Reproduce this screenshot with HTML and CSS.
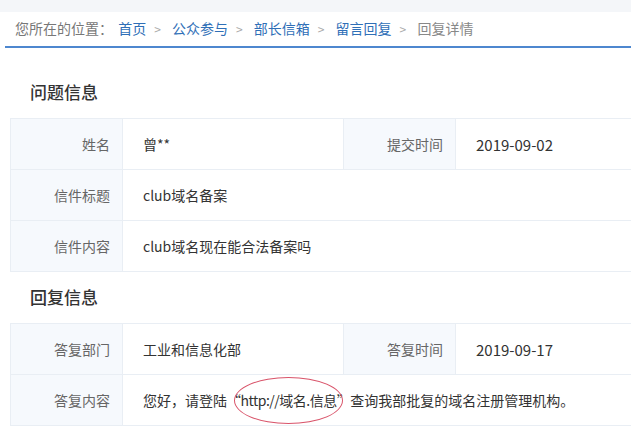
FILE: index.html
```html
<!DOCTYPE html>
<html lang="zh-CN">
<head>
    <meta charset="UTF-8">
    <title>回复详情</title>
    <link rel="stylesheet" href="styles.css">
</head>
<body>
    <div class="topbar"></div>
    <div class="crumbs">
        <span class="here">您所在的位置：</span>
        <a href="#">首页</a><span class="sep">&gt;</span>
        <a href="#">公众参与</a><span class="sep">&gt;</span>
        <a href="#">部长信箱</a><span class="sep">&gt;</span>
        <a href="#">留言回复</a><span class="sep">&gt;</span>
        <span class="current">回复详情</span>
    </div>

    <div class="content">
        <h3 class="sec-title first">问题信息</h3>
        <table class="info">
            <tr>
                <th>姓名</th>
                <td>曾**</td>
                <th>提交时间</th>
                <td class="date">2019-09-02</td>
            </tr>
            <tr>
                <th>信件标题</th>
                <td colspan="3">club域名备案</td>
            </tr>
            <tr>
                <th>信件内容</th>
                <td colspan="3">club域名现在能合法备案吗</td>
            </tr>
        </table>

        <h3 class="sec-title">回复信息</h3>
        <table class="info">
            <tr>
                <th>答复部门</th>
                <td>工业和信息化部</td>
                <th>答复时间</th>
                <td class="date">2019-09-17</td>
            </tr>
            <tr>
                <th>答复内容</th>
                <td colspan="3">您好，请登陆<span class="mark">“http://域名.信息”</span>查询我部批复的域名注册管理机构。</td>
            </tr>
        </table>
    </div>
</body>
</html>
```

FILE: styles.css
```css
body {
    margin: 0;
    font-family: "Noto Sans CJK SC", "Liberation Sans", sans-serif;
    background-color: #fff;
    overflow: hidden;
}
.topbar {
    height: 12px;
    background-color: #f4f6f9;
}
.crumbs {
    height: 34px;
    line-height: 32px;
    margin-left: 5px;
    padding-left: 10px;
    border-bottom: 2px solid #4d87cf;
    font-size: 14px;
    color: #777;
    white-space: nowrap;
}
.crumbs a {
    color: #2f6fb7;
    text-decoration: none;
}
.crumbs .here {
    margin-right: 2px;
}
.crumbs .sep {
    margin: 0 8px;
    color: #aaa;
    font-size: 12px;
}
.crumbs .current {
    color: #888;
}
.content {
    margin-left: 10px;
    width: 700px;
}
.sec-title {
    margin: 0;
    padding: 15px 0 16px 20px;
    font-size: 17px;
    line-height: 20px;
    font-weight: 500;
    color: #333;
}
.sec-title.first {
    padding-top: 34px;
}
.info {
    width: 100%;
    border-collapse: collapse;
    font-size: 14px;
}
.info th,
.info td {
    height: 50px;
    padding: 0;
    border: 1px solid #e9eef4;
}
.info th {
    width: 99px;
    padding-right: 12px;
    text-align: right;
    font-weight: normal;
    color: #666;
    background-color: #f6f9fd;
}
.info td {
    padding-left: 20px;
    color: #333;
}
.info td:nth-child(2) {
    width: 200px;
}
.info td.date {
    font-size: 15px;
}
.mark {
    position: relative;
    letter-spacing: -0.5px;
}
.mark::after {
    content: "";
    position: absolute;
    left: 7px;
    right: 7px;
    top: 50%;
    height: 45px;
    margin-top: -23px;
    border: 1px solid #d9546a;
    border-radius: 50%;
}
```
